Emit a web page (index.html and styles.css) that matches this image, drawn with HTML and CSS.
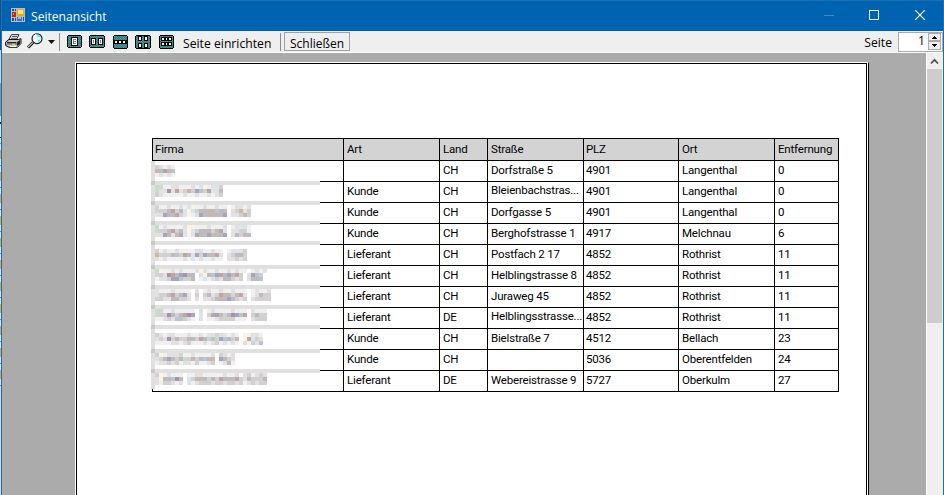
FILE: index.html
```
<!DOCTYPE html>
<html lang="de">
<head>
<meta charset="utf-8">
<title>Seitenansicht</title>
<link rel="stylesheet" href="styles.css">
</head>
<body>
<div class="desktop">
<div class="backdrop"></div>
<div class="window">
  <header class="titlebar">
    <svg class="app-icon" width="15" height="15" viewBox="0 0 15 15" shape-rendering="crispEdges">
      <path fill="#b9bdc2" d="M0 0h14v14H0z"/><path fill="#27527f" d="M1 1h2v2H1zM4 1h1v2H4zM1 10h2v3H1zM4 10h1v3H4zM12 9h1v4h-1z"/>
      <path fill="#c3241c" d="M1 4h4v5H1z"/><path fill="#f08a70" d="M2 5h1v2H2z"/>
      <path fill="#e3ad22" d="M6 1h7v7H6z"/><path fill="#ffe474" d="M7 2h5v4H7z"/>
      <path fill="#2f73d8" d="M6 9h5v4H6z"/><path fill="#8bb9f5" d="M7 9h3v2H7z"/>
    </svg>
    <span class="title">Seitenansicht</span>
    <svg class="controls" width="102" height="12" viewBox="0 0 102 12" fill="none">
      <path stroke="#3d88c9" d="M0 5.500h10"/><path stroke="#fff" d="M45.500.5h9v9h-9z"/><path stroke="#fff" stroke-width="1.200" d="M91.200.2l9.600 9.600M100.800.2l-9.600 9.600"/>
    </svg>
  </header>
  <nav class="toolbar">
    <svg class="print" width="17" height="15" viewBox="0 0 17 15">
      <path fill="#fff" stroke="#222" d="M6.500.7h7.500l-2.800 5H3.800z"/><path stroke="#555" d="M7 2.500h5M6 4.300h5"/>
      <path fill="#c9c9c9" stroke="#111" d="M.6 8L4 5.500h9.500L16 4.700v4.800l-3.600 3.800H4L.6 11.500z"/>
      <path fill="#222" d="M2 8h9l1 1.500H2zM12 8l3-2v4l-3 2z"/><path stroke="#888" d="M1 10.500h11"/><path stroke="#e0e000" stroke-width="1.500" d="M7 10.500h3"/>
      <path fill="#fff" d="M5 12h6v1H5z"/>
    </svg>
    <svg class="zoom" width="16" height="16" viewBox="0 0 16 16">
      <path stroke="#111" stroke-width="3" d="M1 14.500l5-5"/><path stroke="#c8c8c8" stroke-width="1.200" d="M1.200 14l4.600-4.600"/>
      <circle cx="10" cy="5.700" r="5" fill="#d5f5f7" stroke="#111" stroke-width="1.100"/><path fill="#fff" d="M6 3l3-2 1 6-3 2z"/><path fill="#5de2ea" d="M10 2h3v2h-2zM11 7h2v1l-2 1z"/>
    </svg>
    <svg class="caret" width="7" height="4" viewBox="0 0 7 4"><path d="M0 0h7L3.500 4z" fill="#111"/></svg>
    <i class="sep"></i>
    <svg class="pages" width="109" height="15" viewBox="0 0 109 15" shape-rendering="crispEdges">
      <defs><pattern id="weave" width="2" height="2" patternUnits="userSpaceOnUse"><path fill="#258080" d="M0 0h2v2H0z"/><path fill="#5c9090" d="M0 0h1v1H0zM1 1h1v1H1z"/></pattern></defs>
      <path d="M1 0h13v1h1v11h-1v1H1v-1H0V1h1zM23 0h14v1h1v11h-1v1H23v-1h-1V1h1zM47 0h13v1h1v12h-1v1H47v-1h-1V1h1zM69 0h14v1h1v12h-1v1H69v-1h-1V1h1zM93 0h13v1h1v12h-1v1H93v-1h-1V1h1z"/>
      <path fill="url(#weave)" d="M1 1h13v11H1zM23 1h14v11H23zM47 1h13v12H47zM69 1h14v12H69zM93 1h13v12H93z"/>
      <path d="M4 2h7v9H4zM24 3h5v7h-5zM31 3h5v7h-5zM47 5h13v4H47zM71 1h4v5h-4zM77 1h4v5h-4zM71 8h4v5h-4zM77 8h4v5h-4zM94 2h11v4H94zM94 7h11v4H94z"/>
      <path fill="#fff" d="M5 3h5v7H5zM25 4h3v5h-3zM32 4h3v5h-3zM48 6h2v2h-2zM52 6h2v2h-2zM56 6h2v2h-2zM72 2h2v3h-2zM78 2h2v3h-2zM72 9h2v3h-2zM78 9h2v3h-2zM95 3h2v2h-2zM99 3h1v2h-1zM102 3h2v2h-2zM95 8h2v2h-2zM99 8h1v2h-1zM102 8h2v2h-2z"/>
      <path fill="#7777b5" d="M6 4h3v1H6zM6 4h1v5H6zM6 6h3v1H6zM6 8h3v1H6zM26 5h1v3h-1zM33 5h1v3h-1z"/>
    </svg>
    <span class="setup">Seite einrichten</span>
    <i class="sep sep-two"></i>
    <button class="close">Schließen</button>
    <label class="page-label">Seite</label>
    <div class="spinner"><span>1</span>
      <svg width="13" height="17" viewBox="0 0 13 17" shape-rendering="crispEdges"><path fill="#eee" stroke="#aaa" d="M.5.5h12v7H.5zM.5 8.500h12v8H.5z"/><path d="M6 3h1v1h1v1h1v1H4V5h1V4h1zM4 11h5v1H8v1H7v1H6v-1H5v-1H4z"/></svg>
    </div>
  </nav>
  <main class="view">
    <section class="paper-frame"><div class="paper"><div class="report" id="report">
      <svg class="mosaic" id="mosaic" width="170" height="232" viewBox="0 0 170 232" shape-rendering="crispEdges"></svg>
    </div></div></section>
    <aside class="scroll"><svg width="15" height="16" viewBox="0 0 15 16"><path d="M4 10.500l3.500-3.700L11 10.500" fill="none" stroke="#505050" stroke-width="1.800"/></svg><div class="thumb"></div></aside>
  </main>
</div>
</div>
<script src="report.js"></script>
</body>
</html>
```
FILE: styles.css
```
* { box-sizing: border-box; }
body { margin: 0; overflow: hidden; font-family: "Open Sans", "Liberation Sans", sans-serif; color: #000; }
.desktop { display: flex; width: 944px; height: 495px; overflow: hidden; }
.backdrop { width: 1px; background: linear-gradient(#1b4f8c 50px, #cfd4da 50px 83px, #8d9299 83px 116px, #dfe2e6 116px 122px, #111 122px 124px, #dfe2e6 124px 137px, #111 137px 138px, transparent 138px 386px, #d8d8dc 386px), repeating-linear-gradient(#dfe2e6 0 5px, #888 5px 6px, #dfe2e6 6px 12px, #d8a850 12px 21px, #dfe2e6 21px 22px); background-position: 0 0, 0 138px; }
.window { flex: 1; display: flex; flex-direction: column; border-left: 1px solid #1a6fb5; border-right: 1px solid #1a6fb5; }
.titlebar { flex: none; height: 31px; display: flex; background: #0063b1; border-top: 1px solid #1a70b7; }
.app-icon { margin: 7px 0 0 9px; }
.title { margin: 7px 0 0 5px; color: #fff; font-size: 12.1px; line-height: 17px; }
.controls { margin: 9px 17px 0 auto; }
.toolbar { flex: none; height: 22px; display: flex; align-items: flex-start; background: #efefef; border-bottom: 1px solid #fff; font-size: 12.2px; line-height: 17px; }
.print { margin: 3px 0 0 3px; }
.zoom { margin: 2px 0 0 5px; }
.caret { margin: 9px 0 0 5px; }
.sep { width: 1px; height: 18px; margin: 2px 0 0 4px; background: #8c8c8c; }
.pages { margin: 4px 0 0 7px; }
.setup { width: 90px; margin: 4px 0 0 7px; white-space: nowrap; }
.sep-two { margin-left: 7px; }
.close { width: 66px; height: 19px; margin: 1px 0 0 3px; padding: 2px 0 0; border: 1px solid #a0a0a0; background: #efefef; font: inherit; font-size: 12px; line-height: 17px; white-space: nowrap; }
.page-label { margin: 3px 6px 0 auto; }
.spinner { width: 45px; height: 20px; display: flex; justify-content: flex-end; background: #fff; border: 1px solid #aaa; margin: 1px 0 0; line-height: 16px; }
.spinner span { margin-right: 3px; }
.spinner svg { margin-right: 1px; }
.view { flex: 1; min-height: 0; display: flex; background: #ababab; }
.paper-frame { width: 794px; margin: 9px 0 0 73px; border: 1px solid #fff; border-right-color: #000; border-bottom: 0; background: #fff; }
.paper { width: 791px; height: 432px; border: 1px solid #000; border-bottom: 0; background: #fff; padding: 74px 0 0 75px; }
.report { position: relative; width: 687px; border-top: 1px solid #000; border-left: 1px solid #000; font-family: Roboto, "Liberation Sans", sans-serif; font-size: 11.5px; letter-spacing: -0.18px; }
.row { display: grid; grid-template-columns: 191px 96px 48px 96px 95px 96px 64px; height: 21px; line-height: 18px; border-bottom: 1px solid #000; }
.row.head { height: 22px; line-height: 20px; background: #d3d3d3; }
.row span { padding-left: 3px; border-right: 1px solid #000; white-space: nowrap; overflow: hidden; }
.row .first, .row span:nth-child(5) { padding-left: 2px; }
.row .cut { line-height: 17px; }
.mosaic { position: absolute; left: -2px; top: 22px; }
.scroll { width: 17px; margin-left: auto; background: #efefef; border-left: 1px solid #fff; display: flex; flex-direction: column; }
.scroll svg { flex: none; }
.thumb { width: 15px; height: 254px; background: #cdcdcd; }
```
FILE: report.js
```
const rows = [
  ["Firma", "Art", "Land", "Straße", "PLZ", "Ort", "Entfernung"],
  ["", "", "CH", "Dorfstraße 5", "4901", "Langenthal", "0"],
  ["", "Kunde", "CH", "Bleienbachstras...", "4901", "Langenthal", "0"],
  ["", "Kunde", "CH", "Dorfgasse 5", "4901", "Langenthal", "0"],
  ["", "Kunde", "CH", "Berghofstrasse 1", "4917", "Melchnau", "6"],
  ["", "Lieferant", "CH", "Postfach 2 17", "4852", "Rothrist", "11"],
  ["", "Lieferant", "CH", "Helblingstrasse 8", "4852", "Rothrist", "11"],
  ["", "Lieferant", "CH", "Juraweg 45", "4852", "Rothrist", "11"],
  ["", "Lieferant", "DE", "Helblingsstrasse...", "4852", "Rothrist", "11"],
  ["", "Kunde", "CH", "Bielstraße 7", "4512", "Bellach", "23"],
  ["", "Kunde", "CH", "", "5036", "Oberentfelden", "24"],
  ["", "Lieferant", "DE", "Webereistrasse 9", "5727", "Oberkulm", "27"]
];
const report = document.getElementById("report");
rows.forEach((cells, r) => {
  const row = document.createElement("div");
  row.className = r ? "row" : "row head";
  cells.forEach((text, c) => {
    const cell = document.createElement("span");
    cell.textContent = text;
    if (!c) cell.className = "first";
    if (text.endsWith("...")) cell.className = "cut";
    row.append(cell);
  });
  report.append(row);
});

// Pixelated company names: y offset, then three lines of 4px blocks.
const colors = { a: "#f1f0f0", b: "#e2e0e1", c: "#d3d0d2", d: "#bfbabe", e: "#a5a6b9", f: "#bda6a6", g: "#cbb9a5", h: "#dae6ed", i: "#fdf3e4", j: "#cdd9cd", k: "#a294aa", l: "#b9c6d2" };
const names = [
  [4, ["cbaba", "gdegl", "ababa"]],
  [24, ["jjaabbaaabahiahbc", "jbbkbfbcgcelcfhbd", "cbaaaaabaabaababc"]],
  [44, ["jaabaabahiaabaabaa abhab", "jccdfcdhihcdddgldd bcgbc", "bbeddfchiabeddgdde bbcdc"]],
  [64, ["jabaaaabiiaaabaaab abhba", "jccdfcdhihcdddcdfb bbcca", "bbedbdfhihfddegdde bdcdd"]],
  [88, ["cabaabaaaabbaabaa abhbc", "gcccdlcfdheceddfb bcddc", "babaaaabahabaabaa bbcbc"]],
  [108, ["jiaababaaabibaabaababaa abab", "jcbkfdekdd hidlefdedfc belc", "abbceelccd ahabcbddcbc bddl"]],
  [128, ["baaabaaaa b abaabaabaaa abaab", "bccdfcdeb c cdbcfgdjdfb abdcc", "ccbbddccb b bbcdddedcbc bcccc"]],
  [148, ["jjaabaaaaa b abaaaabaaa baaa", "jcckdcdfke h cfedcdkelf cdcc", "aabcbllcba h aabccccaaa bccc"]],
  [172, ["cbabbaaabaababbjbbaba iabba", "bcbkcdccddcfdcljeldcd ifhcb", "aaaabbabcaaababcababa bacbl"]],
  [192, ["ciabbbjaabaaaab cbab", "bjdedcdjcdcdldg edcb", "abbcbcabbacaabc abda"]],
  [212, ["ciabaaa aabbaaaaabaab bcabcb", "biddlkd hcdgdcdcfdddfcbdcccd", "baccbab babcccbccbccbcabcbcc"]]
];
const block = (x, y, w, h, fill) => `<rect x="${x}" y="${y}" width="${w}" height="${h}" fill="${fill}"/>`;
let art = block(0, 0, 169, 228, "#fff") + block(0, 0, 4, 228, "#e0e0e0");
[20, 40, 60, 80, 104, 124, 144, 164, 188, 208].forEach(y => {
  art += block(0, y, 169, 4, "#e0e0e0") + block(0, y, 4, 4, "#c9c9c9");
});
names.forEach(([y, lines]) => lines.forEach((line, j) => [...line].forEach((key, i) => {
  if (colors[key]) art += block(4 + i * 4, y + j * 4, 4, 4, colors[key]);
})));
document.getElementById("mosaic").innerHTML = art;
```
